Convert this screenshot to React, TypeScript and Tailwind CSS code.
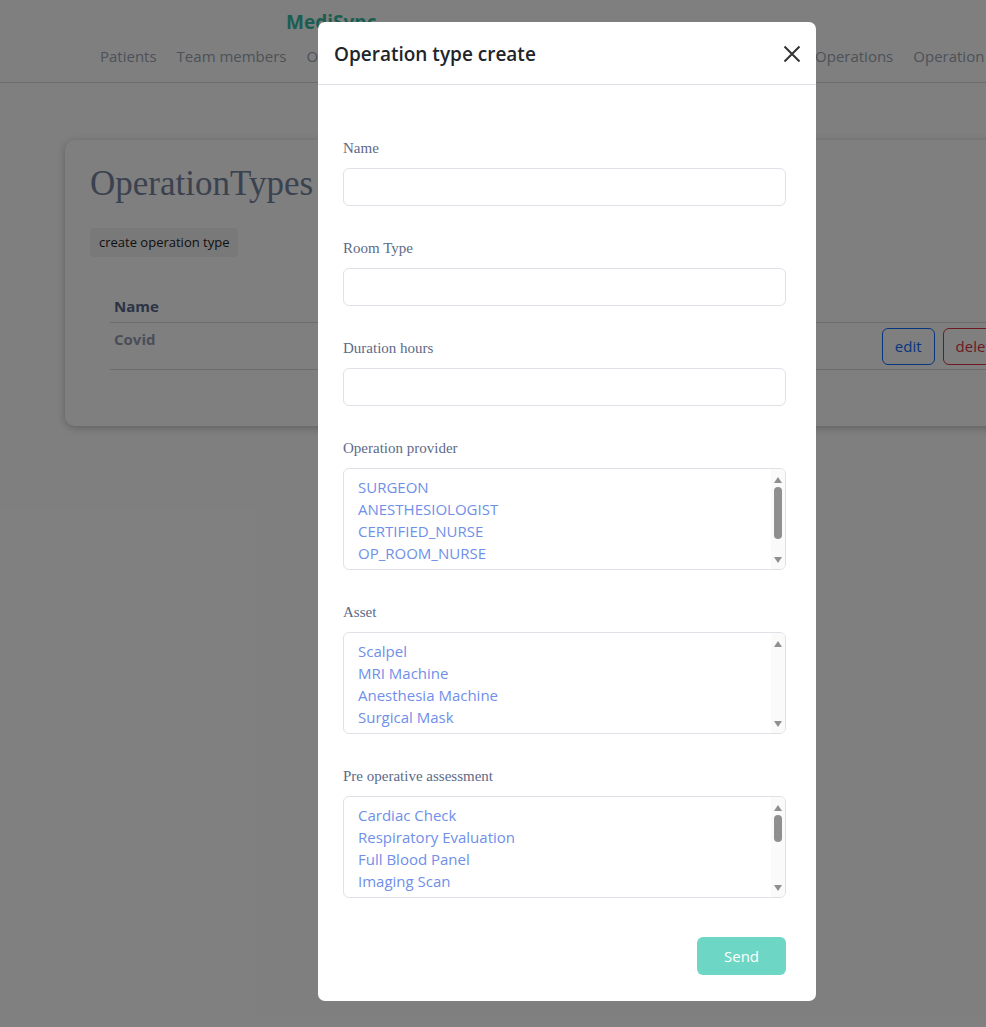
import React from "react";

const sans = { fontFamily: '"Open Sans", "Noto Sans", sans-serif' };
const serif = { fontFamily: '"Liberation Serif", serif' };

function FakeList({ items, thumbTop, thumbH }: { items: string[]; thumbTop: number; thumbH: number }) {
  return (
    <div className="relative h-[102px] w-full overflow-hidden rounded-[6px] border border-[#dee2e6] bg-white">
      <div className="flex flex-col pl-[14px] pt-[7px] text-[15px] leading-[22px] text-[#6f8fe9]" style={sans}>
        {items.map((t) => (
          <div key={t}>{t}</div>
        ))}
      </div>
      <div className="absolute right-0 top-0 h-full w-[14px] bg-[#fafafa]">
        <div className="mx-auto mt-[8px] h-0 w-0 border-x-[4px] border-b-[6px] border-x-transparent border-b-[#8f8f8f]" />
        {thumbH > 0 && (
          <div className="absolute left-[3px] w-[8px] rounded-full bg-[#8f8f8f]" style={{ top: thumbTop, height: thumbH }} />
        )}
        <div className="absolute bottom-[6px] left-[3px] h-0 w-0 border-x-[4px] border-t-[6px] border-x-transparent border-t-[#8f8f8f]" />
      </div>
    </div>
  );
}

function Field({ label, children }: { label: string; children: React.ReactNode }) {
  return (
    <div className="flex flex-col">
      <label className="mb-[11px] text-[15px] leading-[18px] text-[#5d6a88]" style={serif}>
        {label}
      </label>
      {children}
    </div>
  );
}

function Input() {
  return <div className="h-[38px] w-full rounded-[6px] border border-[#dee2e6] bg-white" />;
}

export default function App() {
  return (
    <div className="relative h-[1027px] w-[986px] overflow-hidden bg-white" style={sans}>
      {/* Page behind */}
      <header className="h-[83px] border-b border-[#d8d8d8]">
        <div className="pl-[286px] pt-[9px] text-[19px] font-bold leading-[26px] text-[#35bda5]">MediSync</div>
        <nav className="mt-[11px] flex gap-[20px] whitespace-nowrap pl-[100px] text-[15px] leading-[20px] text-[#9aa3b0]">
          <span>Patients</span>
          <span>Team members</span>
          <span>Operation types</span>
          <span>Rooms</span>
          <span>Specializations</span>
          <span>Appointments</span>
          <span>Users</span>
          <span className="ml-[6px]">Operations</span>
          <span>Operation requests</span>
        </nav>
      </header>

      <div className="ml-[65px] mt-[57px] w-[1000px] rounded-[10px] bg-white pb-[56px] pl-[25px] pt-[22px] shadow-[0_2px_8px_rgba(0,0,0,0.25)]">
        <h1 className="text-[35px] leading-[44px] text-[#76849f]" style={serif}>
          OperationTypes
        </h1>
        <button className="mt-[22px] rounded-[4px] bg-[#f3f3f3] px-[9px] py-[6px] text-[13px] leading-[17px] text-[#1e1e1e]">
          create operation type
        </button>
        <table className="mt-[39px] ml-[20px] w-[900px] border-collapse text-left text-[15px]">
          <thead>
            <tr className="border-b border-[#d8d8d8]">
              <th className="px-[4px] pb-[6px] font-bold leading-[20px] text-[#56678e]">Name</th>
              <th />
            </tr>
          </thead>
          <tbody>
            <tr className="border-b border-[#d8d8d8]">
              <td className="px-[4px] pt-[6px] align-top font-bold leading-[20px] text-[#959db1]">Covid</td>
              <td className="pb-[4px] pl-[719px] pt-[5px]">
                <div className="flex gap-[8px]">
                  <span className="flex h-[37px] items-center rounded-[6px] border border-[#0d6efd] px-[12px] text-[#0d6efd]">edit</span>
                  <span className="flex h-[37px] items-center rounded-[6px] border border-[#dc3545] px-[12px] text-[#dc3545]">delete</span>
                </div>
              </td>
            </tr>
          </tbody>
        </table>
      </div>

      {/* Overlay */}
      <div className="absolute inset-0 bg-black/50" />

      {/* Modal */}
      <div className="absolute left-[318px] top-[22px] flex h-[979px] w-[498px] flex-col rounded-[7px] bg-white">
        <div className="flex h-[63px] items-center justify-between border-b border-[#dee2e6] pl-[16px] pr-[14px] pt-[2px]">
          <h5 className="text-[19px] font-semibold leading-[24px] text-[#212529]">Operation type create</h5>
          <svg width="20" height="20" viewBox="0 0 16 16" className="text-[#333]">
            <path d="M2 2 L14 14 M14 2 L2 14" stroke="currentColor" strokeWidth="1.6" />
          </svg>
        </div>
        <div className="flex flex-col pl-[25px] pr-[30px] pt-[54px]">
          <div className="flex flex-col gap-[33px]">
            <Field label="Name"><Input /></Field>
            <Field label="Room Type"><Input /></Field>
            <Field label="Duration hours"><Input /></Field>
            <Field label="Operation provider">
              <FakeList items={["SURGEON", "ANESTHESIOLOGIST", "CERTIFIED_NURSE", "OP_ROOM_NURSE", "TECHNICIAN"]} thumbTop={18} thumbH={52} />
            </Field>
            <Field label="Asset">
              <FakeList items={["Scalpel", "MRI Machine", "Anesthesia Machine", "Surgical Mask"]} thumbTop={0} thumbH={0} />
            </Field>
            <Field label="Pre operative assessment">
              <FakeList items={["Cardiac Check", "Respiratory Evaluation", "Full Blood Panel", "Imaging Scan", "Allergy Screening"]} thumbTop={18} thumbH={27} />
            </Field>
          </div>
          <div className="mt-[39px] flex justify-end">
            <button className="h-[38px] w-[89px] rounded-[6px] bg-[#6dd6c4] text-[15px] text-white">Send</button>
          </div>
        </div>
      </div>
    </div>
  );
}
